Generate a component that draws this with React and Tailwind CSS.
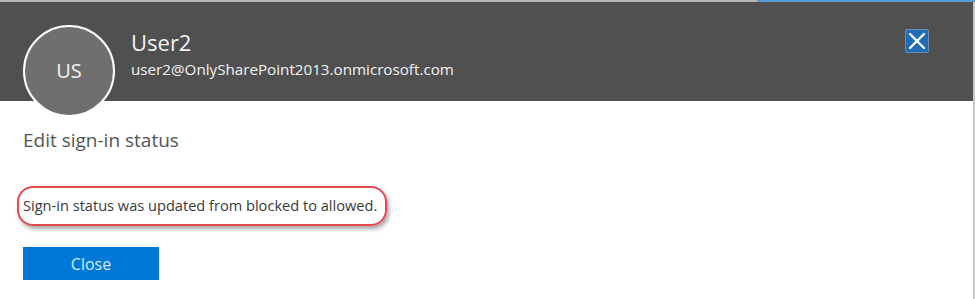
import React from 'react';

export default function App() {
  return (
    <div className="relative w-[975px] h-[299px] bg-white overflow-hidden font-['Open_Sans',sans-serif]">
      {/* top edge */}
      <div className="flex h-[2px]">
        <div className="w-[757px] bg-[#b4b4b4]" />
        <div className="flex-1 bg-[#5b9bd5]" />
      </div>

      <div className="flex h-[297px]">
        <div className="flex-1 flex flex-col">
          {/* Header */}
          <div className="flex h-[99px] bg-[#505050] items-start">
            <div className="ml-[23px] mt-[23px] w-[92px] h-[92px] flex-shrink-0 rounded-full border-2 border-white bg-[#6f6f6f] flex items-center justify-center z-10">
              <span className="text-[#f2f2f2] text-[20px] leading-none">US</span>
            </div>
            <div className="ml-[16px] pt-[26px] flex-1 text-[#f2f2f2]">
              <div className="text-[22px] leading-[28px]">User2</div>
              <div className="text-[15.2px] leading-[22px] mt-[2px]">user2@OnlySharePoint2013.onmicrosoft.com</div>
            </div>
            <button className="mt-[27px] mr-[44px] w-[24px] h-[24px] bg-[#1f6db8] border border-[#6a8db0] rounded-[2px] flex items-center justify-center">
              <svg width="18" height="18" viewBox="0 0 18 18">
                <path d="M2 2L16 16M16 2L2 16" stroke="white" strokeWidth="2.4" strokeLinecap="round" />
              </svg>
            </button>
          </div>

          {/* Body */}
          <div className="px-[23px] pt-[26px]">
            <h2 className="text-[19px] leading-[26px] text-[#555555]">Edit sign-in status</h2>
            <div className="mt-[33px] -ml-[6px] w-[370px] h-[40px] rounded-[16px] border-2 border-[#e8474e] shadow-[2px_3px_4px_rgba(0,0,0,0.35)] flex items-center pl-[4px]">
              <span className="text-[14.6px] text-[#3a3a3a] whitespace-nowrap">Sign-in status was updated from blocked to allowed.</span>
            </div>
            <button className="mt-[21px] w-[136px] h-[33px] bg-[#0078d7] text-[#d7e9f9] text-[16px] flex items-center justify-center">
              Close
            </button>
          </div>
        </div>
        <div className="w-[2px] bg-[#c8c8c8]" />
      </div>
    </div>
  );
}
